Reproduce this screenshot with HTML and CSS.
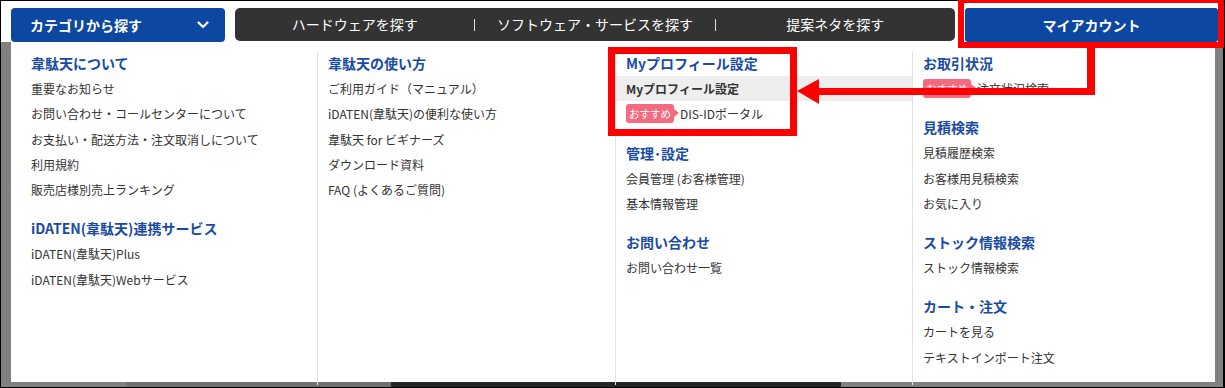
FILE: index.html
```html
<!DOCTYPE html>
<html lang="ja">
<head>
    <meta charset="UTF-8">
    <meta name="viewport" content="width=device-width, initial-scale=1.0">
    <title>韋駄天 - マイアカウント メニュー</title>
    <link rel="stylesheet" href="styles.css">
</head>
<body>

    <div class="frame">
        <!-- Global Navigation -->
        <header class="topbar">
            <a class="cat-btn">
                <span>カテゴリから探す</span>
                <svg class="chevron" width="12" height="8" viewBox="0 0 12 8">
                    <path d="M1.5 1.5 L6 6 L10.5 1.5" fill="none" stroke="#fff" stroke-width="2.2" stroke-linecap="round" stroke-linejoin="round"/>
                </svg>
            </a>
            <nav class="search-nav">
                <a>ハードウェアを探す</a>
                <span class="sep"></span>
                <a>ソフトウェア・サービスを探す</a>
                <span class="sep"></span>
                <a>提案ネタを探す</a>
            </nav>
            <a class="account-btn">マイアカウント</a>
        </header>

        <!-- Mega Menu -->
        <div class="stage">
            <div class="mega">
                <div class="col col-first">
                    <div class="group">
                        <h3>韋駄天について</h3>
                        <a>重要なお知らせ</a>
                        <a>お問い合わせ・コールセンターについて</a>
                        <a>お支払い・配送方法・注文取消しについて</a>
                        <a>利用規約</a>
                        <a>販売店様別売上ランキング</a>
                    </div>
                    <div class="group">
                        <h3>iDATEN(韋駄天)連携サービス</h3>
                        <a>iDATEN(韋駄天)Plus</a>
                        <a>iDATEN(韋駄天)Webサービス</a>
                    </div>
                </div>

                <div class="col">
                    <div class="group">
                        <h3>韋駄天の使い方</h3>
                        <a>ご利用ガイド（マニュアル）</a>
                        <a>iDATEN(韋駄天)の便利な使い方</a>
                        <a>韋駄天 for ビギナーズ</a>
                        <a>ダウンロード資料</a>
                        <a>FAQ (よくあるご質問)</a>
                    </div>
                </div>

                <div class="col">
                    <div class="group">
                        <h3>Myプロフィール設定</h3>
                        <a class="current">Myプロフィール設定</a>
                        <a><span class="badge">おすすめ</span>DIS-IDポータル</a>
                    </div>
                    <div class="group">
                        <h3>管理･設定</h3>
                        <a>会員管理 (お客様管理)</a>
                        <a>基本情報管理</a>
                    </div>
                    <div class="group">
                        <h3>お問い合わせ</h3>
                        <a>お問い合わせ一覧</a>
                    </div>
                </div>

                <div class="col">
                    <div class="group">
                        <h3>お取引状況</h3>
                        <a><span class="badge">おすすめ</span>注文状況検索</a>
                    </div>
                    <div class="group">
                        <h3>見積検索</h3>
                        <a>見積履歴検索</a>
                        <a>お客様用見積検索</a>
                        <a>お気に入り</a>
                    </div>
                    <div class="group">
                        <h3>ストック情報検索</h3>
                        <a>ストック情報検索</a>
                    </div>
                    <div class="group">
                        <h3>カート・注文</h3>
                        <a>カートを見る</a>
                        <a>テキストインポート注文</a>
                    </div>
                </div>
            </div>
        </div>

        <!-- Red annotation overlay -->
        <svg class="annotations" width="1225" height="388" viewBox="0 0 1225 388">
            <rect x="961" y="0" width="260" height="45" fill="none" stroke="#ff0000" stroke-width="6"/>
            <rect x="611.5" y="50.5" width="182" height="82" fill="none" stroke="#ff0000" stroke-width="7"/>
            <rect x="1087" y="46" width="8" height="49" fill="#ff0000"/>
            <rect x="816" y="88" width="279" height="7" fill="#ff0000"/>
            <polygon points="797,91 819,79 819,104" fill="#ff0000"/>
        </svg>
    </div>

</body>
</html>
```

FILE: styles.css
```css
/* Basic Styles */
body {
    margin: 0;
    padding: 0;
    font-family: "Noto Sans CJK JP", "Noto Sans", sans-serif;
    background-color: #fff;
}

a {
    text-decoration: none;
    cursor: pointer;
}

.frame {
    position: relative;
    width: 1225px;
    height: 388px;
    box-sizing: border-box;
    border: 1px solid #000;
    border-right-width: 2px;
    display: flex;
    flex-direction: column;
    background-color: #fff;
}

/* Top bar */
.topbar {
    height: 41px;
    box-sizing: border-box;
    padding: 7px 0 0 10px;
    display: flex;
    gap: 10px;
    background-color: #fff;
}

.cat-btn {
    width: 214px;
    height: 34px;
    box-sizing: border-box;
    padding: 0 16px 0 19px;
    display: flex;
    align-items: center;
    justify-content: space-between;
    background-color: #0c47a1;
    border-radius: 4px;
    color: #fff;
    font-size: 14px;
    font-weight: bold;
}

.chevron {
    display: block;
}

.search-nav {
    width: 720px;
    height: 33px;
    display: flex;
    align-items: center;
    background-color: #333;
    border-radius: 5px;
}

.search-nav a {
    flex: 1;
    text-align: center;
    color: #fff;
    font-size: 14px;
    line-height: 33px;
}

.search-nav .sep {
    width: 1px;
    height: 12px;
    background-color: #ddd;
}

.account-btn {
    width: 253px;
    height: 34px;
    line-height: 34px;
    text-align: center;
    background-color: #0c47a1;
    border-radius: 3px;
    color: #fff;
    font-size: 14px;
    font-weight: bold;
}

/* Area behind the dropdown */
.stage {
    flex: 1;
    padding-left: 10px;
    background: linear-gradient(90deg, #808080 0, #808080 125px, #707070 125px, #707070 390px, #262626 390px, #262626 840px, #808080 840px);
}

/* Mega menu */
.mega {
    width: 1204px;
    height: 340px;
    box-sizing: border-box;
    padding: 10px 0;
    display: grid;
    grid-template-columns: 306px 298px 297px 1fr;
    background-color: #fff;
}

.col {
    border-left: 1px solid #e3e3e3;
}

.col-first {
    border-left: none;
}

.group {
    margin-bottom: 15px;
}

.group h3 {
    margin: 0;
    padding: 0 0 2px 10px;
    font-size: 14px;
    line-height: 22px;
    font-weight: bold;
    color: #1a4ba3;
}

.group a {
    display: block;
    padding-left: 10px;
    font-size: 12px;
    line-height: 25.25px;
    color: #333;
    white-space: nowrap;
}

.col-first .group h3,
.col-first .group a {
    padding-left: 20px;
}

.group a.current {
    background-color: #eee;
    font-weight: bold;
}

.badge {
    position: relative;
    display: inline-block;
    margin-right: 6px;
    padding: 0 3px;
    background-color: #f46b80;
    border-radius: 3px;
    color: #fff;
    font-size: 10.5px;
    line-height: 19px;
    vertical-align: 1px;
}

.badge::after {
    content: "";
    position: absolute;
    right: -5px;
    top: 5px;
    border-top: 4.5px solid transparent;
    border-bottom: 4.5px solid transparent;
    border-left: 5px solid #f46b80;
}

/* Annotation */
.annotations {
    position: absolute;
    left: -1px;
    top: -1px;
    pointer-events: none;
}
```
